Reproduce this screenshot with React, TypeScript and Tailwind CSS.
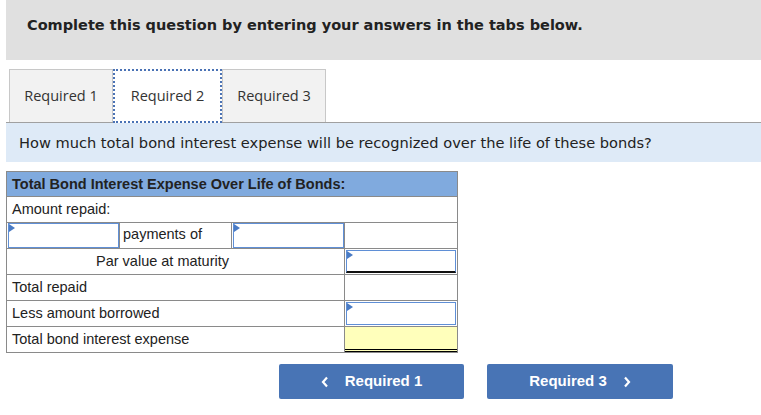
import React from "react";

const Tri = () => (
  <span className="absolute left-0 top-0 w-0 h-0 border-t-[4px] border-b-[4px] border-l-[6px] border-t-transparent border-b-transparent border-l-[#4a7bc4]" />
);

const InputCell = ({ bottom }: { bottom?: "single" }) => (
  <div
    className={
      "relative h-full w-full border border-[#5f8fd6] bg-white " +
      (bottom === "single" ? "border-b-2 border-b-[#111]" : "")
    }
  >
    <Tri />
  </div>
);

export default function App() {
  const td = "border border-[#8a8a8a] p-0 h-[26px]";
  return (
    <div className="w-[761px] h-[415px] bg-white" style={{ fontFamily: "'Liberation Sans', Arial, sans-serif" }}>
      <div className="ml-[6px] h-[60px] bg-[#e0e0e0] pl-[21px] pt-[15px]">
        <p className="text-[14.5px] font-bold text-[#222] leading-[20px]" style={{ fontFamily: "'DejaVu Sans', Verdana, sans-serif" }}>
          Complete this question by entering your answers in the tabs below.
        </p>
      </div>

      <div className="ml-[6px] mt-[9px] border-b border-[#a0a0a0] flex pl-[3px]" style={{ fontFamily: "'Open Sans', sans-serif" }}>
        <div className="w-[104px] h-[53px] bg-[#f2f2f2] border border-b-0 border-[#c8c8c8] flex items-center justify-center text-[14.5px] text-[#333]">
          Required 1
        </div>
        <div className="w-[109px] h-[54px] -mb-px bg-white border-2 border-dotted border-[#4a72b5] flex items-center justify-center text-[14.5px] text-[#333]">
          Required 2
        </div>
        <div className="w-[104px] h-[53px] bg-[#f2f2f2] border border-b-0 border-[#c8c8c8] flex items-center justify-center text-[14.5px] text-[#333]">
          Required 3
        </div>
      </div>

      <div className="ml-[6px] h-[39px] bg-[#deeaf7] pl-[13px] flex items-center">
        <p className="text-[14.6px] text-[#222]" style={{ fontFamily: "'DejaVu Sans', Verdana, sans-serif" }}>
          How much total bond interest expense will be recognized over the life of these bonds?
        </p>
      </div>

      <table className="ml-[6px] mt-[9px] border-collapse text-[14.5px] text-[#222] table-fixed w-[451px]">
        <colgroup>
          <col className="w-[113px]" />
          <col className="w-[112px]" />
          <col className="w-[113px]" />
          <col className="w-[113px]" />
        </colgroup>
        <tbody>
          <tr>
            <td colSpan={4} className="border border-[#8a8a8a] bg-[#80aade] h-[25px] px-[5px] font-bold leading-none">
              Total Bond Interest Expense Over Life of Bonds:
            </td>
          </tr>
          <tr>
            <td colSpan={4} className={td + " px-[5px] leading-none"}>Amount repaid:</td>
          </tr>
          <tr>
            <td className={td + " pl-[1px]"}><InputCell /></td>
            <td className={td + " px-[3px] leading-none align-top pt-[4px]"}>payments of</td>
            <td className={td + " pl-[1px]"}><InputCell /></td>
            <td className={td}></td>
          </tr>
          <tr>
            <td colSpan={3} className={td + " text-center pr-[26px] leading-none"}>Par value at maturity</td>
            <td className={td + " p-[1px]"}><InputCell bottom="single" /></td>
          </tr>
          <tr>
            <td colSpan={3} className={td + " px-[5px] leading-none"}>Total repaid</td>
            <td className={td}></td>
          </tr>
          <tr>
            <td colSpan={3} className={td + " px-[5px] leading-none"}>Less amount borrowed</td>
            <td className={td + " p-[1px]"}><InputCell /></td>
          </tr>
          <tr>
            <td colSpan={3} className={td + " px-[5px] leading-none"}>Total bond interest expense</td>
            <td className={td + " p-0"}>
              <div className="h-[25px] bg-[#ffffbb] border-b-[3px] border-double border-b-black" />
            </td>
          </tr>
        </tbody>
      </table>

      <div className="flex mt-[11px] ml-[279px] gap-[23px]">
        <button className="w-[185px] h-[35px] bg-[#4874b5] rounded-[2px] text-white font-bold text-[15px] flex items-center justify-center gap-[16px]">
          <svg width="8" height="12" viewBox="0 0 8 12"><path d="M6 1.5 L2 6 L6 10.5" fill="none" stroke="white" strokeWidth="2.2" /></svg>
          Required 1
        </button>
        <button className="w-[186px] h-[35px] bg-[#4874b5] rounded-[2px] text-white font-bold text-[15px] flex items-center justify-center gap-[16px]">
          Required 3
          <svg width="8" height="12" viewBox="0 0 8 12"><path d="M2 1.5 L6 6 L2 10.5" fill="none" stroke="white" strokeWidth="2.2" /></svg>
        </button>
      </div>
    </div>
  );
}
